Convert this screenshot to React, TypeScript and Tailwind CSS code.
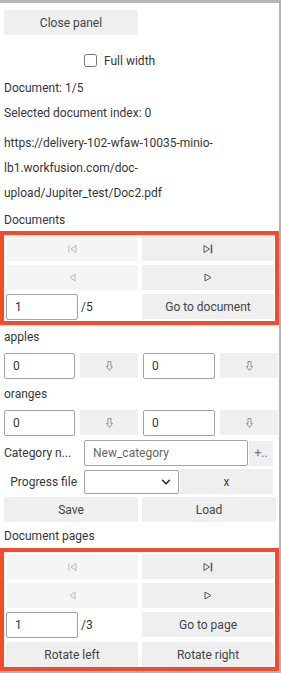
import { ChevronDown } from "lucide-react";

function FirstIcon({ on }: { on: boolean }) {
  const c = on ? "#555" : "#b8b8b8";
  return (
    <svg width="9" height="10" viewBox="0 0 9 10">
      <line x1="1" y1="1" x2="1" y2="9" stroke={c} strokeWidth="1" />
      <path d="M8 1.5 L3 5 L8 8.5 Z" fill="none" stroke={c} strokeWidth="1" />
    </svg>
  );
}

function LastIcon({ on }: { on: boolean }) {
  const c = on ? "#555" : "#b8b8b8";
  return (
    <svg width="10" height="10" viewBox="0 0 10 10">
      <path d="M1 1.5 L6.5 5 L1 8.5 Z" fill="none" stroke={c} strokeWidth="1" />
      <line x1="8.5" y1="0.5" x2="8.5" y2="9.5" stroke={on ? "#6a5440" : c} strokeWidth="1.5" />
    </svg>
  );
}

function PrevIcon({ on }: { on: boolean }) {
  const c = on ? "#555" : "#b8b8b8";
  return (
    <svg width="7" height="9" viewBox="0 0 7 9">
      <path d="M6 1 L1 4.5 L6 8 Z" fill="none" stroke={c} strokeWidth="1" />
    </svg>
  );
}

function NextIcon({ on }: { on: boolean }) {
  const c = on ? "#555" : "#b8b8b8";
  return (
    <svg width="8" height="9" viewBox="0 0 8 9">
      <path d="M1 1 L7 4.5 L1 8 Z" fill="none" stroke={c} strokeWidth="1" />
    </svg>
  );
}

function DownIcon() {
  return (
    <svg width="7" height="10" viewBox="0 0 7 10">
      <path d="M2 0.5 H5 V5.5 H6.5 L3.5 9.5 L0.5 5.5 H2 Z" fill="none" stroke="#888" strokeWidth="0.9" />
    </svg>
  );
}

const btn = "h-[25px] bg-[#efefef] text-[#444] flex items-center justify-center";
const field = "h-[26px] border border-[#a3a3a3] rounded-[2px] bg-white pl-[8px] text-[#333] outline-none";

function Highlight() {
  return <div className="pointer-events-none absolute top-0 bottom-0 left-[-4px] right-[-3px] border-4 border-[#f24c2c]" />;
}

function Pager({ total, label, rotate }: { total: number; label: string; rotate?: boolean }) {
  return (
    <div className={`relative px-[2px] ${rotate ? "pt-[6px] pb-[4px]" : "py-[5px]"}`}>
      <div className="grid grid-cols-2 gap-x-[4px] gap-y-[4px]">
        <button className={`${btn} bg-[#f5f5f5]`}>
          <FirstIcon on={false} />
        </button>
        <button className={`${btn} bg-[#ececec]`}>
          <LastIcon on />
        </button>
        <button className={`${btn} bg-[#f5f5f5]`}>
          <PrevIcon on={false} />
        </button>
        <button className={`${btn} bg-[#ececec]`}>
          <NextIcon on />
        </button>
        <div className="flex items-center gap-[3px]">
          <input defaultValue="1" className={`${field} w-[72px] h-[26px]`} />
          <span className="text-[#333]">/{total}</span>
        </div>
        <button className={btn}>{label}</button>
        {rotate && (
          <>
            <button className={btn}>Rotate left</button>
            <button className={btn}>Rotate right</button>
          </>
        )}
      </div>
      <Highlight />
    </div>
  );
}

function CountRow() {
  return (
    <div className="grid grid-cols-[71px_58px_72px_58px] gap-x-[5px] h-[26px]">
      <input defaultValue="0" className={`${field} w-full`} />
      <button className={`${btn} h-[25px]`}>
        <DownIcon />
      </button>
      <input defaultValue="0" className={`${field} w-full`} />
      <button className={`${btn} h-[25px]`}>
        <DownIcon />
      </button>
    </div>
  );
}

export default function App() {
  return (
    <div className="w-[281px] h-[673px] overflow-hidden bg-white border-t-[3px] border-r-2 border-b-2 border-[#b5b5b5] font-['Roboto',sans-serif] text-[12px] text-[#363636]">
      <div className="pl-[4px] pr-[3px]">
        <button className={`${btn} mt-[7px] w-[134px]`}>Close panel</button>

        <label className="mt-[13px] h-[25px] flex items-center pl-[80px] gap-[7px]">
          <input type="checkbox" className="w-[13px] h-[13px] m-0" />
          <span>Full width</span>
        </label>

        <div className="mt-[3px] leading-[25px]">Document: 1/5</div>
        <div className="leading-[25px]">Selected document index: 0</div>
        <div className="mt-[5px] leading-[25px]">
          <div>https://delivery-102-wfaw-10035-minio-</div>
          <div>lb1.workfusion.com/doc-</div>
          <div>upload/Jupiter_test/Doc2.pdf</div>
        </div>
        <div className="mt-[3px] leading-[22px]">Documents</div>

        <Pager total={5} label="Go to document" />

        <div className="leading-[24px]">apples</div>
        <div className="mt-[4px]">
          <CountRow />
        </div>
        <div className="leading-[31px]">oranges</div>
        <CountRow />

        <div className="mt-[4px] h-[25px] grid grid-cols-[73px_164px_24px] gap-x-[4px] items-center">
          <span className="whitespace-nowrap">Category n...</span>
          <input defaultValue="New_category" className={`${field} ml-[3px] w-[164px] h-[25px] text-[#666]`} />
          <button className={`${btn} text-[#777]`}>+..</button>
        </div>

        <div className="mt-[4px] h-[24px] grid grid-cols-[73px_95px_93px] gap-x-[4px] items-center">
          <span className="whitespace-nowrap text-right">Progress file</span>
          <div className="relative ml-[3px] w-[95px] h-[24px]">
            <select className="w-full h-full appearance-none border border-[#a3a3a3] rounded-[2px] bg-white outline-none" />
            <ChevronDown className="absolute right-[6px] top-[5px] w-[14px] h-[14px] text-[#222]" strokeWidth={2.5} />
          </div>
          <button className={`${btn} h-[24px]`}>x</button>
        </div>

        <div className="mt-[4px] grid grid-cols-2 gap-x-[4px]">
          <button className={btn}>Save</button>
          <button className={btn}>Load</button>
        </div>

        <div className="mt-[2px] leading-[24px]">Document pages</div>

        <Pager total={3} label="Go to page" rotate />
      </div>
    </div>
  );
}
